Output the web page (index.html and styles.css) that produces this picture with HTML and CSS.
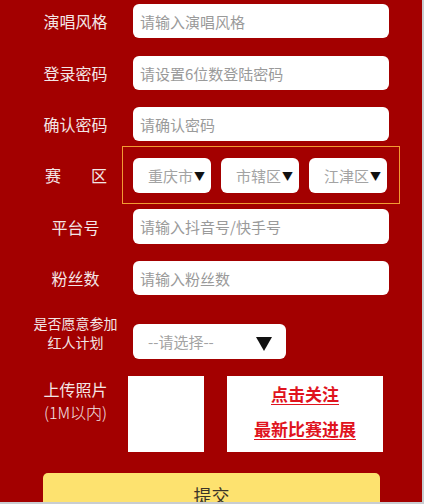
FILE: index.html
```html
<!DOCTYPE html>
<html lang="zh">
<head>
<meta charset="utf-8">
<link rel="stylesheet" href="styles.css">
</head>
<body>
<div class="page">
  <div class="row r1"><div class="label">演唱风格</div><div class="input">请输入演唱风格</div></div>
  <div class="row r2"><div class="label">登录密码</div><div class="input">请设置6位数登陆密码</div></div>
  <div class="row r3"><div class="label">确认密码</div><div class="input">请确认密码</div></div>
  <div class="row region-row">
    <div class="label region-label"><span>赛</span><span>区</span></div>
    <div class="region-box">
      <div class="rsel">重庆市<span class="tri">▼</span></div>
      <div class="rsel">市辖区<span class="tri">▼</span></div>
      <div class="rsel">江津区<span class="tri">▼</span></div>
    </div>
  </div>
  <div class="row r5"><div class="label">平台号</div><div class="input">请输入抖音号/快手号</div></div>
  <div class="row r6"><div class="label">粉丝数</div><div class="input">请输入粉丝数</div></div>
  <div class="row plan-row">
    <div class="label small">是否愿意参加<br>红人计划</div>
    <div class="select">--请选择--<span class="bigtri"></span></div>
  </div>
  <div class="row upload-row">
    <div class="label upl">上传照片<br><span class="thin">(1M以内)</span></div>
    <div class="upload"></div>
    <div class="follow"><a>点击关注</a><a>最新比赛进展</a></div>
  </div>
  <div class="submit">提交</div>
</div>
</body>
</html>
```
FILE: styles.css
```css
html, body { margin: 0; padding: 0; }
body { background: #c9cdd1; font-family: "Noto Sans CJK SC", "Noto Sans", sans-serif; }
.page {
  width: 422px; height: 502px; background: #a30000; overflow: hidden;
  padding-top: 4px; box-sizing: border-box;
}
.row { display: flex; align-items: center; }
.label {
  width: 103px; margin-left: 24px; margin-right: 6px; text-align: center;
  color: #f3e6e6; font-size: 16px; line-height: 20px; flex: none;
}
.input {
  width: 256px; height: 34px; background: #fff; border-radius: 6px; box-sizing: border-box;
  padding-left: 7px; color: #9a9a9a; font-size: 15px; display: flex; align-items: center;
}
.r1 { margin-bottom: 18px; }
.r2 { margin-bottom: 17px; }
.r3 { margin-bottom: 5px; }
.region-label {
  width: 62px; margin-left: 45px; margin-right: 15px;
  display: flex; justify-content: space-between;
}
.region-box {
  width: 278px; height: 58px; box-sizing: border-box; border: 1px solid #f29b33;
  padding: 11px 0 10px 10px; display: flex; gap: 10px;
}
.rsel {
  width: 78px; height: 35px; background: #fff; border-radius: 6px; box-sizing: border-box;
  padding-left: 15px; color: #a3a3a3; font-size: 15px; display: flex; align-items: center;
}
.tri { color: #111; font-size: 11px; margin-left: 1px; }
.r5 { margin-top: 5px; }
.r5 .input { height: 35px; }
.r6 { margin-top: 17px; }
.plan-row { margin-top: 19px; align-items: flex-start; }
.small { font-size: 14px; line-height: 19px; }
.select {
  margin-top: 10px; width: 153px; height: 35px; background: #fff; border-radius: 6px;
  box-sizing: border-box; padding-left: 15px; color: #a3a3a3; font-size: 15px;
  display: flex; align-items: center; position: relative;
}
.bigtri {
  position: absolute; left: 123px; top: 13px; width: 0; height: 0;
  border-left: 8px solid transparent; border-right: 8px solid transparent;
  border-top: 14px solid #111;
}
.upload-row { margin-top: 17px; align-items: flex-start; }
.upl { line-height: 23px; padding-top: 2px; margin-right: 1px; }
.thin { font-weight: 300; }
.upload { width: 76px; height: 76px; background: #fff; flex: none; }
.follow {
  margin-left: 23px; width: 156px; height: 76px; background: #fff;
  display: flex; flex-direction: column; align-items: center;
}
.follow a {
  color: #e0141e; font-weight: bold; font-size: 17px; line-height: 35px;
  text-decoration: underline; text-underline-offset: 3px;
}
.submit {
  margin-top: 21px; margin-left: 43px; width: 337px; height: 44px; background: #fde26f;
  border-radius: 5px; color: #3a3328; font-size: 18px;
  display: flex; align-items: center; justify-content: center;
}
```
